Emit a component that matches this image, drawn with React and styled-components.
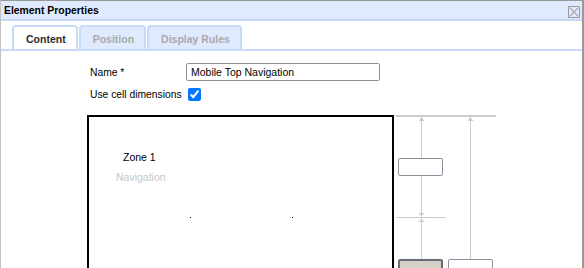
import React from "react";
import styled, { createGlobalStyle } from "styled-components";

const Global = createGlobalStyle`
  html, body { margin: 0; padding: 0; background: #fff; }
  body { font-family: "Liberation Sans", Arial, sans-serif; }
  * { box-sizing: border-box; }
`;

const Window = styled.div`
  width: 584px;
  height: 268px;
  overflow: hidden;
  border-top: 1px solid #999;
  border-right: 2px solid #999;
  border-left: 1px solid #c4c4c4;
  background: #fff;
  display: flex;
  flex-direction: column;
`;

const TitleBar = styled.div`
  height: 20px;
  flex: none;
  background: #dfeaff;
  border-bottom: 2px solid #c3d9f7;
  display: flex;
  align-items: center;
  justify-content: space-between;
  padding: 1px 2px 0 3px;
`;

const Title = styled.span`
  font-size: 10.4px;
  font-weight: bold;
  color: #000;
`;

const CloseButton = styled.span`
  width: 12px;
  height: 12px;
  display: block;
  margin-top: -1px;
`;

const TabStrip = styled.div`
  flex: none;
  display: flex;
  gap: 1px;
  padding: 4px 0 0 11px;
  border-bottom: 2px solid #c6dbf8;
`;

const Tab = styled.div`
  height: 24px;
  padding: 5px 10px 0 12px;
  border: 2px solid #c6dbf8;
  border-bottom: none;
  border-radius: 4px 4px 0 0;
  background: ${(p) => (p.$active ? "#fff" : "#dfeaff")};
  color: ${(p) => (p.$active ? "#2b2b2b" : "#a9a9a9")};
  font-size: 10.5px;
  font-weight: bold;
  line-height: 14px;
`;

const Body = styled.div`
  flex: 1;
  padding: 12px 0 0 86px;
  display: flex;
  flex-direction: column;
`;

const FormGrid = styled.div`
  display: grid;
  grid-template-columns: 96px auto;
  row-gap: 7px;
  align-items: center;
  margin-left: 3px;
`;

const Label = styled.label`
  font-size: 10.3px;
  color: #000;
`;

const TextInput = styled.input`
  width: 194px;
  height: 18px;
  border: 1px solid #8f8f9d;
  border-radius: 2px;
  padding: 0 4px;
  font-family: "Liberation Sans", Arial, sans-serif;
  font-size: 10.5px;
  color: #000;
  outline: none;
`;

const Check = styled.input`
  width: 13px;
  height: 13px;
  margin: 0 0 0 2px;
  accent-color: #0075ff;
  display: block;
`;

const Editor = styled.div`
  display: flex;
  gap: 2px;
  margin-top: 14px;
`;

const ZoneCanvas = styled.div`
  position: relative;
  width: 307px;
  height: 160px;
  border: 2px solid #000;
  flex: none;
`;

const ZoneName = styled.span`
  position: absolute;
  left: ${(p) => p.$x}px;
  top: ${(p) => p.$y}px;
  font-size: 10.5px;
  color: ${(p) => (p.$muted ? "#c6c6c6" : "#000")};
  white-space: nowrap;
`;

const Handle = styled.span`
  position: absolute;
  left: ${(p) => p.$x}px;
  top: 100px;
  width: 1px;
  height: 1px;
  background: #000;
`;

const SizeControl = styled.div`
  position: relative;
  width: 100px;
  height: 153px;
  flex: none;
`;

const SizeBox = styled.div`
  position: absolute;
  left: ${(p) => p.$x}px;
  top: ${(p) => p.$y}px;
  width: 45px;
  height: 18px;
  border: ${(p) => (p.$pressed ? "2px solid #6b6b73" : "1px solid #8f8f9d")};
  border-radius: 2px;
  background: ${(p) => (p.$pressed ? "#d4d0c8" : "#fff")};
`;

const Lines = styled.svg`
  position: absolute;
  left: 0;
  top: 0;
`;

function CloseIcon() {
  return (
    <CloseButton>
      <svg width="12" height="12" viewBox="0 0 12 12">
        <rect x="0.5" y="0.5" width="11" height="11" fill="none" stroke="#9a9a9a" />
        <path d="M2 2 L10 10 M10 2 L2 10" stroke="#aaaaaa" strokeWidth="1.2" />
      </svg>
    </CloseButton>
  );
}

function SizeDiagram() {
  const c = "#cccccc";
  return (
    <SizeControl>
      <Lines width="100" height="153" viewBox="0 0 100 153">
        <rect x="0" y="0" width="100" height="2" fill={c} />
        <rect x="25" y="2" width="1" height="151" fill={c} />
        <rect x="74" y="2" width="1" height="151" fill={c} />
        <rect x="0" y="102" width="50" height="1" fill={c} />
        <polygon points="25.5,2 22.5,6 28.5,6" fill={c} />
        <polygon points="74.5,2 71.5,6 77.5,6" fill={c} />
        <polygon points="25.5,101.5 22.5,98 28.5,98" fill={c} />
        <polygon points="25.5,103.5 22.5,107 28.5,107" fill={c} />
      </Lines>
      <SizeBox $x={2} $y={43} />
      <SizeBox $x={2} $y={144} $pressed />
      <SizeBox $x={52} $y={144} />
    </SizeControl>
  );
}

export default function App() {
  return (
    <>
      <Global />
      <Window>
        <TitleBar>
          <Title>Element Properties</Title>
          <CloseIcon />
        </TitleBar>
        <TabStrip>
          <Tab $active>Content</Tab>
          <Tab>Position</Tab>
          <Tab>Display Rules</Tab>
        </TabStrip>
        <Body>
          <FormGrid>
            <Label htmlFor="name">Name *</Label>
            <TextInput id="name" defaultValue="Mobile Top Navigation" />
            <Label htmlFor="cell">Use cell dimensions</Label>
            <Check id="cell" type="checkbox" defaultChecked />
          </FormGrid>
          <Editor>
            <ZoneCanvas>
              <ZoneName $x={34} $y={34}>Zone 1</ZoneName>
              <ZoneName $x={27} $y={54} $muted>Navigation</ZoneName>
              <Handle $x={101} />
              <Handle $x={203} />
            </ZoneCanvas>
            <SizeDiagram />
          </Editor>
        </Body>
      </Window>
    </>
  );
}
